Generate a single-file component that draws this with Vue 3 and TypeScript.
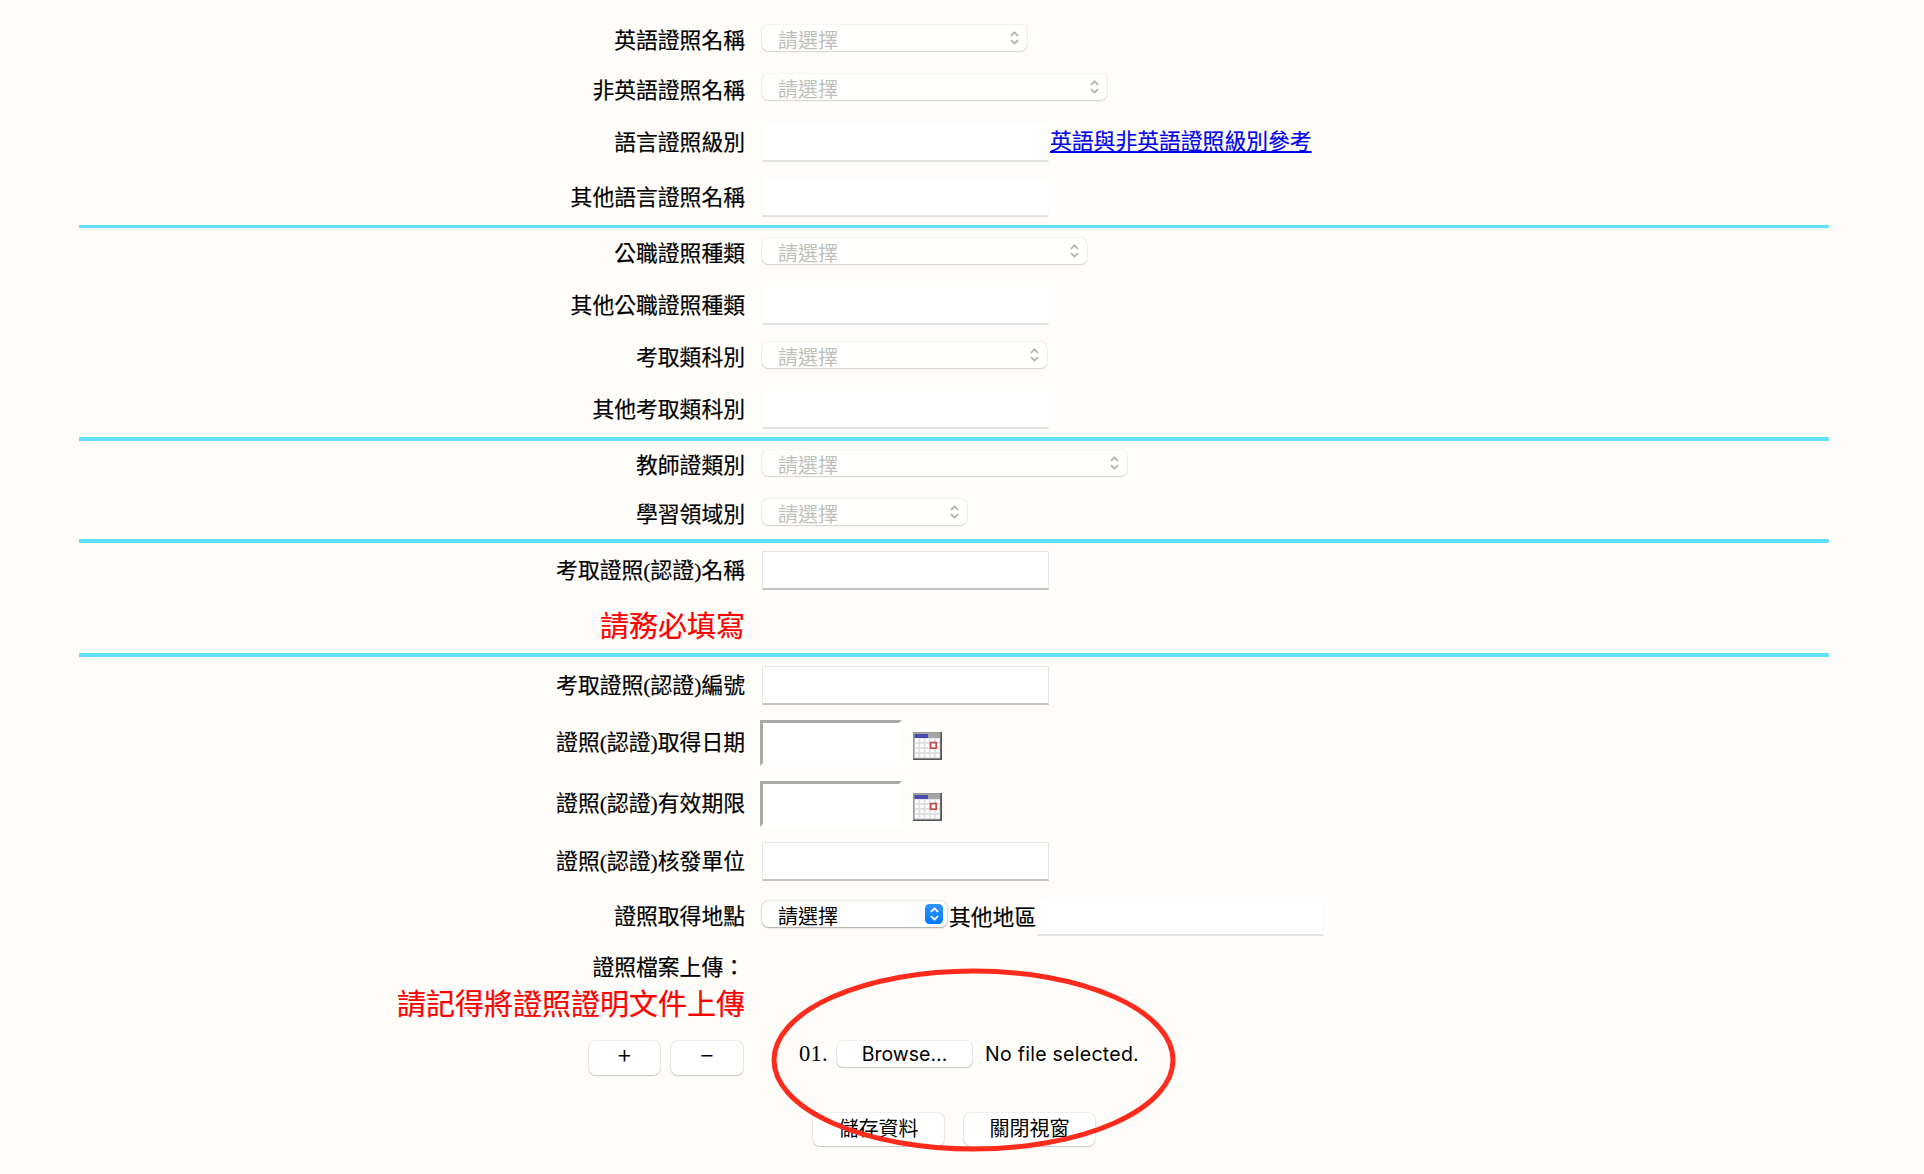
<script setup lang="ts">
interface Row {
  label: string
  kind: 'select' | 'text' | 'textOff' | 'date' | 'place' | 'none'
  gap: number
  width?: number
  link?: string
  alert?: boolean
  raised?: boolean
}

interface Section {
  rule: number
  gap: number
  rows: Row[]
}

// gap is the vertical space before a row or a rule, in pixels
const sections: Section[] = [
  {
    gap: 8,
    rule: 3,
    rows: [
      { label: '英語證照名稱', kind: 'select', gap: 20, width: 265 },
      { label: '非英語證照名稱', kind: 'select', gap: 10, width: 345, raised: true },
      { label: '語言證照級別', kind: 'textOff', gap: 12, link: '英語與非英語證照級別參考' },
      { label: '其他語言證照名稱', kind: 'textOff', gap: 15 },
    ],
  },
  {
    gap: 8,
    rule: 4,
    rows: [
      { label: '公職證照種類', kind: 'select', gap: 5, width: 325 },
      { label: '其他公職證照種類', kind: 'textOff', gap: 12 },
      { label: '考取類科別', kind: 'select', gap: 12, width: 285 },
      { label: '其他考取類科別', kind: 'textOff', gap: 12 },
    ],
  },
  {
    gap: 5,
    rule: 4,
    rows: [
      { label: '教師證類別', kind: 'select', gap: 4, width: 365 },
      { label: '學習領域別', kind: 'select', gap: 9, width: 205 },
    ],
  },
  {
    gap: 7,
    rule: 4,
    rows: [
      { label: '考取證照(認證)名稱', kind: 'text', gap: 7 },
      { label: '請務必填寫', kind: 'none', gap: 16, alert: true },
    ],
  },
  {
    gap: 0,
    rule: 0,
    rows: [
      { label: '考取證照(認證)編號', kind: 'text', gap: 8 },
      { label: '證照(認證)取得日期', kind: 'date', gap: 17 },
      { label: '證照(認證)有效期限', kind: 'date', gap: 21 },
      { label: '證照(認證)核發單位', kind: 'text', gap: 18 },
      { label: '證照取得地點', kind: 'place', gap: 15 },
      { label: '證照檔案上傳：', kind: 'none', gap: 11 },
    ],
  },
]
</script>

<template>
  <main class="page">
    <section v-for="(s, si) in sections" :key="si">
      <div v-for="r in s.rows" :key="r.label" class="row" :style="{ marginTop: r.gap + 'px' }">
        <div class="label" :class="{ alert: r.alert }">{{ r.label }}</div>
        <div class="control" :class="{ raised: r.raised }">
          <span v-if="r.kind === 'select'" class="select off" :style="{ width: r.width + 'px' }">
            <span class="value">請選擇</span>
            <svg class="arrows" width="9" height="14" viewBox="0 0 9 14"><path d="M1.5 4.4 4.5 1.4 7.5 4.4M1.5 9.6 4.5 12.6 7.5 9.6" /></svg>
          </span>
          <input v-else-if="r.kind === 'text'" class="field" type="text" />
          <input v-else-if="r.kind === 'textOff'" class="field off" type="text" disabled />
          <template v-else-if="r.kind === 'date'">
            <input class="date" type="text" />
            <svg class="cal" width="29" height="28" viewBox="0 0 29 28">
              <rect width="29" height="28" fill="#a4a4a4" />
              <rect x="1.5" y="6" width="25.5" height="20.5" fill="#dedbe1" />
              <g fill="#fff">
                <template v-for="y in 4" :key="y">
                  <rect v-for="x in 5" :key="x" :x="x * 5.2 - 3.2" :y="y * 5.1 + 1.5" width="3.6" height="3.3" />
                </template>
              </g>
              <rect x="1.5" y="2" width="13.5" height="4" fill="#4b4bae" />
              <rect x="17.6" y="10.6" width="5.6" height="5.6" fill="#fff" stroke="#bd4a4c" stroke-width="1.7" />
              <path d="M.5 28V.5H29" fill="none" stroke="#999" />
              <path d="M28.2 0V27.2H0" fill="none" stroke="#555" stroke-width="1.6" />
            </svg>
          </template>
          <template v-else-if="r.kind === 'place'">
            <span class="select place">
              <span class="value">請選擇</span>
              <span class="badge">
                <svg class="arrows" width="9" height="14" viewBox="0 0 9 14"><path d="M1.5 4.4 4.5 1.4 7.5 4.4M1.5 9.6 4.5 12.6 7.5 9.6" /></svg>
              </span>
            </span>
            <span class="area">其他地區</span>
            <input class="field off" type="text" disabled />
          </template>
          <a v-if="r.link" class="link" href="#">{{ r.link }}</a>
        </div>
      </div>
      <div v-if="s.rule" class="rule" :style="{ marginTop: s.gap + 'px', height: s.rule + 'px' }"></div>
    </section>

    <div class="row notice">
      <div class="label alert">請記得將證照證明文件上傳</div>
    </div>

    <div class="upload">
      <div class="counter">
        <button class="btn add">+</button>
        <button class="btn remove">−</button>
      </div>
      <div class="file">
        <span class="num">01.</span>
        <button class="browse">Browse...</button>
        <span class="status">No file selected.</span>
      </div>
    </div>

    <div class="actions">
      <button class="btn">儲存資料</button>
      <button class="btn">關閉視窗</button>
    </div>

    <svg class="mark" width="406" height="186" viewBox="0 0 406 186">
      <ellipse cx="202.5" cy="93" rx="199.5" ry="89" />
    </svg>
  </main>
</template>

<style>
body {
  margin: 0;
  background: #fefdf9;
}
</style>

<style scoped>
.page {
  position: relative;
  display: flow-root;
  box-sizing: border-box;
  width: 1924px;
  height: 1174px;
  overflow: hidden;
  background: #fefdf9;
  color: #000;
  font-family: 'Liberation Serif', 'Noto Sans CJK TC', serif;
  font-size: 21.8px;
}
section {
  display: flow-root;
}
.row {
  display: flex;
  gap: 17px;
  height: 40px;
}
.label {
  width: 745px;
  text-align: right;
  line-height: 42px;
  white-space: nowrap;
  -webkit-text-stroke: 0.2px currentColor;
}
.alert {
  color: #f00;
  font-size: 29px;
  line-height: 43px;
}
.control {
  display: flex;
  align-items: center;
  height: 40px;
  white-space: nowrap;
}
.control.raised {
  height: 38px;
}
.rule {
  margin-left: 79px;
  width: 1750px;
  background: #60dfff;
}
.select {
  display: flex;
  align-items: center;
  justify-content: space-between;
  box-sizing: border-box;
  height: 26px;
  margin-bottom: 5px;
  padding: 0 8px 0 16px;
  border-radius: 6.5px;
  background: #fff;
  box-shadow: 0 0 1px 0.5px rgba(0, 0, 0, 0.09), 0 1px 1.5px rgba(0, 0, 0, 0.26);
  font-size: 20px;
}
.select .value {
  line-height: 26px;
  padding-top: 6px;
}
.select.off {
  background: #fffffd;
  color: #bfbfbd;
  box-shadow: 0 0 1px 0.5px rgba(0, 0, 0, 0.045), 0 1px 1.5px rgba(0, 0, 0, 0.14);
}
.arrows {
  fill: none;
  stroke: #b5b5b3;
  stroke-width: 2;
  stroke-linecap: round;
  stroke-linejoin: round;
}
.select.place {
  width: 185px;
  padding-right: 4px;
}
.badge {
  display: flex;
  align-items: center;
  justify-content: center;
  width: 18px;
  height: 20px;
  border-radius: 4.5px;
  background: linear-gradient(#3395ff, #007aff);
}
.badge .arrows {
  stroke: #fff;
}
.area {
  margin-left: 2px;
  margin-right: 1px;
  padding-top: 3px;
  line-height: 40px;
  -webkit-text-stroke: 0.2px currentColor;
}
.field {
  box-sizing: border-box;
  width: 287px;
  height: 39px;
  margin: 0 0 0 -0.5px;
  padding: 0 6px;
  border: 1px solid #e6e6e8;
  border-bottom: 2px solid #c2c2c3;
  border-radius: 0;
  background: #fff;
  outline: 0;
}
.field.off {
  border-color: #fafafa #fafafa #e3e3e4;
}
.date {
  box-sizing: border-box;
  flex: none;
  width: 142px;
  height: 46px;
  margin: 1px 0 0 -2px;
  border: 3px solid;
  border-color: #a9a9a9 #fff #fff #a9a9a9;
  background: #fff;
  outline: 0;
}
.cal {
  margin: 8px 0 0 11px;
}
.link {
  margin-left: 1.5px;
  color: #00e;
  line-height: 41px;
  -webkit-text-stroke: 0.2px currentColor;
}
.notice {
  margin-top: -3px;
}
.btn,
.browse {
  box-sizing: border-box;
  margin: 0;
  padding: 0;
  border: 0;
  border-radius: 7px;
  background: #fff;
  box-shadow: 0 0 1px 0.5px rgba(0, 0, 0, 0.06), 0 1px 1.5px rgba(0, 0, 0, 0.18);
  color: #000;
  font-family: Inter, 'Noto Sans CJK TC', sans-serif;
  font-size: 20px;
}
.upload {
  display: flex;
  margin-top: 17px;
  height: 34px;
}
.counter {
  display: flex;
  justify-content: flex-end;
  gap: 11px;
  width: 743px;
}
.counter .btn {
  width: 71px;
  height: 34px;
  padding-bottom: 8px;
  font-size: 25px;
  font-weight: 300;
  line-height: 26px;
}
.counter .remove {
  width: 72px;
}
.file {
  display: flex;
  align-items: center;
  height: 26px;
  padding-left: 56px;
}
.num {
  width: 38px;
  font-size: 22.5px;
  letter-spacing: 0.3px;
}
.browse {
  width: 135px;
  height: 26px;
  border-radius: 6px;
  font-size: 19.5px;
}
.status {
  margin-left: 13px;
  font-family: Inter, sans-serif;
  font-size: 19.5px;
  letter-spacing: 0.27px;
}
.actions {
  display: flex;
  gap: 20px;
  margin: 38px 0 0 813px;
}
.actions .btn {
  width: 131px;
  height: 33px;
  padding-bottom: 5px;
}
.mark {
  position: absolute;
  left: 771px;
  top: 967px;
  fill: none;
  stroke: #ff2c1e;
  stroke-width: 5;
  pointer-events: none;
}
</style>
